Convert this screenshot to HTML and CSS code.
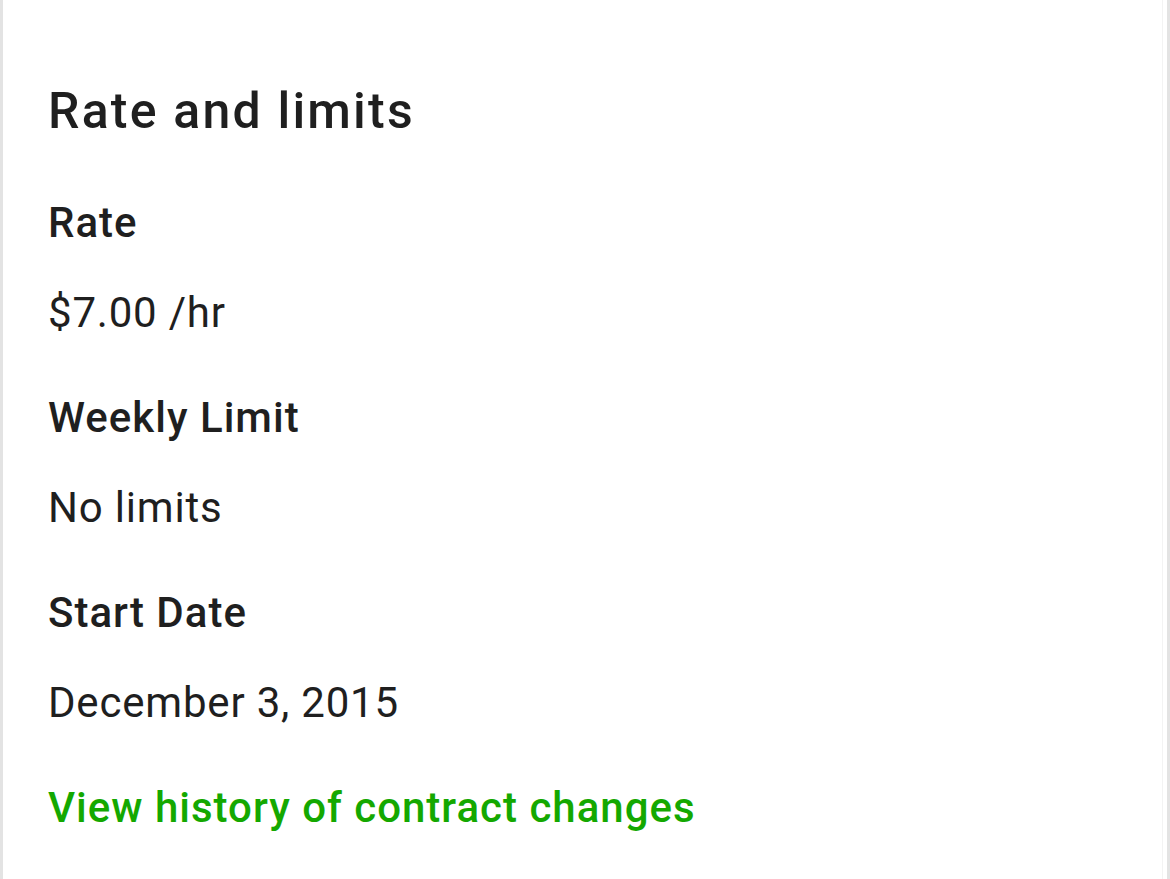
FILE: index.html
```html
<!DOCTYPE html>
<html lang="en">
<head>
    <meta charset="UTF-8">
    <meta name="viewport" content="width=device-width, initial-scale=1.0">
    <title>Rate and limits</title>
    <link rel="stylesheet" href="styles.css">
</head>
<body>

<div class="page">
    <div class="card">
        <h2>Rate and limits</h2>

        <div class="fields">
            <div class="field">
                <div class="label">Rate</div>
                <div class="value">$7.00 /hr</div>
            </div>

            <div class="field">
                <div class="label">Weekly Limit</div>
                <div class="value">No limits</div>
            </div>

            <div class="field">
                <div class="label">Start Date</div>
                <div class="value">December 3, 2015</div>
            </div>

            <a class="history-link" href="#">View history of contract changes</a>
        </div>
    </div>
</div>

</body>
</html>
```

FILE: styles.css
```css
body {
    margin: 0;
    font-family: Roboto, "Liberation Sans", Arial, sans-serif;
    background-color: #fff;
    color: #1f1f1f;
}

.page {
    height: 879px;
    box-sizing: border-box;
    border-left: 3px solid #e3e3e3;
    border-right: 3px solid #e3e3e3;
    padding-right: 4px;
}

.card {
    height: 100%;
    box-sizing: border-box;
    border-right: 1px solid #f3f3f3;
    padding: 81px 0 0 45px;
}

h2 {
    margin: 0 0 57px;
    font-size: 50px;
    line-height: 60px;
    font-weight: 500;
    letter-spacing: 2.2px;
}

.fields {
    display: flex;
    flex-direction: column;
    align-items: flex-start;
    gap: 55px;
}

.field {
    display: flex;
    flex-direction: column;
    gap: 40px;
}

.label {
    font-size: 42px;
    line-height: 50px;
    font-weight: 500;
    letter-spacing: 1px;
}

.value {
    font-size: 42px;
    line-height: 50px;
    letter-spacing: 0.8px;
}

.history-link {
    font-size: 42px;
    line-height: 50px;
    font-weight: 500;
    letter-spacing: 1px;
    color: #14a800;
    text-decoration: none;
}
```
